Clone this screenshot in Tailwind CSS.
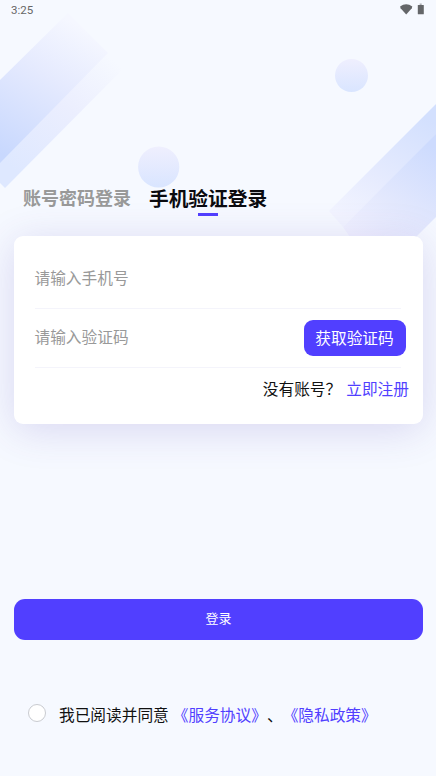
<!DOCTYPE html>
<html lang="zh-CN">
<head>
<meta charset="utf-8">
<meta name="viewport" content="width=device-width, initial-scale=1">
<title>登录</title>
<script src="https://cdn.jsdelivr.net/npm/@tailwindcss/browser@4"></script>
</head>
<body class="bg-[#f6f9ff]">
<div class="relative w-[436px] h-[776px] overflow-hidden bg-[#f6f9ff] font-['Noto_Sans_CJK_SC',sans-serif] text-[15.7px] text-[#111]">
  <!-- Decorative ribbons and circles -->
  <svg class="absolute inset-0" width="436" height="260" viewBox="0 0 436 260" aria-hidden="true">
    <defs>
      <linearGradient id="a" gradientUnits="userSpaceOnUse" x1="96" y1="36" x2="20" y2="165">
        <stop offset="0" stop-color="#f5f7ff"/><stop offset=".4" stop-color="#e5eafe"/><stop offset="1" stop-color="#c8d8fe"/>
      </linearGradient>
      <linearGradient id="b" gradientUnits="userSpaceOnUse" x1="116" y1="62" x2="25" y2="178">
        <stop offset="0" stop-color="#f6f9ff"/><stop offset=".45" stop-color="#ebeefe"/><stop offset="1" stop-color="#dee8ff"/>
      </linearGradient>
      <linearGradient id="c" x1="0" y1="0" x2="0" y2="1">
        <stop offset="0" stop-color="#efeffe"/><stop offset="1" stop-color="#d9e5ff"/>
      </linearGradient>
      <linearGradient id="d" gradientUnits="userSpaceOnUse" x1="350" y1="222" x2="416" y2="112">
        <stop offset="0" stop-color="#f2f4ff"/><stop offset=".4" stop-color="#e6ebfe"/><stop offset="1" stop-color="#d3e0fe"/>
      </linearGradient>
      <linearGradient id="e" gradientUnits="userSpaceOnUse" x1="356" y1="236" x2="422" y2="140">
        <stop offset="0" stop-color="#f1f2ff"/><stop offset=".4" stop-color="#e3e8fd"/><stop offset="1" stop-color="#cddbfe"/>
      </linearGradient>
    </defs>
    <path d="M108 53L122 70L5 188L0 183V160Z" fill="url(#b)"/>
    <path d="M68 13L108 53L0 163V80Z" fill="url(#a)"/>
    <circle cx="158.700" cy="167" r="20.600" fill="url(#c)"/>
    <circle cx="351.500" cy="75.500" r="16.500" fill="url(#c)"/>
    <path d="M436 104V136L343 227L329 211Z" fill="url(#d)"/>
    <path d="M436 134V217L393 260H366L343 227Z" fill="url(#e)"/>
  </svg>

  <div class="relative flex h-full flex-col">
    <header class="flex h-[20px] shrink-0 items-center justify-between pl-[11px] pr-[11px] text-[#666]">
      <span class="font-[Roboto,sans-serif] text-[11.5px] leading-[20px]">3:25</span>
      <svg width="26" height="14" viewBox="0 0 26 14" class="shrink-0" fill="#646669" aria-hidden="true">
        <path d="M1.100 3.400Q7.200-.700 13.300 3.400L12.800 5.200L7.200 11.500L1.600 5.200Z"/>
        <path d="M20.700 .500H22.700V2.500H20.700Z" opacity=".5"/>
        <rect x="18.800" y="2" width="6" height="9.200" rx=".5"/>
      </svg>
    </header>

    <nav class="mt-[164px] flex h-[32px] shrink-0 pl-[23px]">
      <button class="mr-[18px] h-[26px] text-[18px] font-bold leading-[26px] text-[#999]">账号密码登录</button>
      <button class="flex flex-col items-center text-[19.7px] font-bold leading-[28px] text-[#0b0b0f]"><span>手机验证登录</span><span class="mt-[1px] h-[3px] w-[20px] bg-[#513fff]"></span></button>
    </nav>

    <main class="mx-[14px] mt-[20px] h-[187.500px] w-[409px] shrink-0 rounded-[9px] bg-white pl-[21px] shadow-[0_6px_40px_rgba(81,63,180,0.18)]">
      <div class="flex h-[73px] w-[366px] items-center border-b border-[#f4f4fb] pt-[11px] text-[#999]"><span class="-ml-[.5px]">请输入手机号</span></div>
      <div class="flex h-[59px] w-[366px] items-center justify-between border-b border-[#f4f4fb] text-[#999]">
        <span class="-ml-[.5px] pb-[3px]">请输入验证码</span>
        <button class="-mr-[4.500px] mb-[1px] h-[36px] w-[102px] shrink-0 rounded-[9px] bg-[#513fff] text-white">获取验证码</button>
      </div>
      <div class="flex h-[41px] w-[374px] items-center justify-end"><span>没有账号？</span><a class="ml-[5px] text-[#513fff]">立即注册</a></div>
    </main>

    <button class="ml-[14px] mt-[175.500px] h-[40.500px] w-[409px] shrink-0 rounded-[11px] bg-[#513fff] pb-[3px] text-[13px] text-white">登录</button>

    <footer class="mt-[63px] flex h-[24px] shrink-0 items-center pl-[28px]">
      <span class="mb-[4px] mr-[13px] h-[18px] w-[18px] rounded-full border border-[#c9cbd0] bg-white"></span>
      <span class="mr-[4px]">我已阅读并同意</span>
      <a class="text-[#513fff]">《服务协议》</a><span>、</span><a class="text-[#513fff]">《隐私政策》</a>
    </footer>
  </div>
</div>
</body>
</html>
